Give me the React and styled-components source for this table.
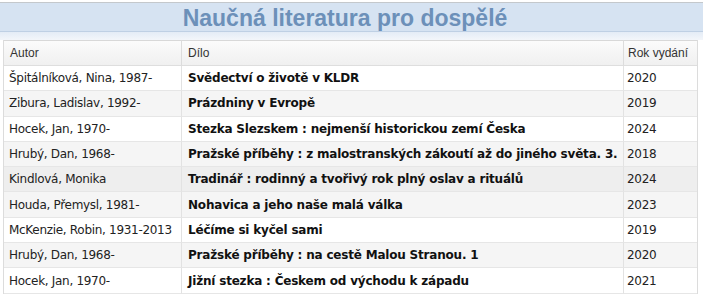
import React from "react";
import styled, { createGlobalStyle } from "styled-components";

const Global = createGlobalStyle`
  html, body { margin: 0; padding: 0; background: #ffffff; }
  body { font-family: "Liberation Sans", Arial, sans-serif; }
`;

const Page = styled.div`
  width: 703px;
  height: 296px;
  overflow: hidden;
  padding-top: 2px;
  box-sizing: border-box;
`;

const TitleBar = styled.div`
  height: 28px;
  border-top: 1px solid #c4c8cc;
  background: #d6e3f2;
  border-bottom: 1px solid #bfd0e4;
  display: flex;
  align-items: center;
  justify-content: center;
`;

const Title = styled.h1`
  margin: 1px 13px 0 0;
  font-family: "Liberation Sans", Arial, sans-serif;
  font-weight: bold;
  font-size: 23px;
  line-height: 26px;
  color: #6c90b9;
`;

const Band = styled.div`
  height: 8px;
  background: linear-gradient(#e4ecf6, #f3f6fa);
`;

const Table = styled.div`
  margin: 0 5px 0 3px;
  border-left: 1px solid #dcdcdc;
  border-right: 1px solid #dcdcdc;
  display: grid;
  grid-template-columns: 177px 442px 1fr;
`;

const HeadCell = styled.div`
  height: 24px;
  display: flex;
  align-items: center;
  padding-left: ${(p) => p.$pad}px;
  font-family: "Liberation Sans", Arial, sans-serif;
  font-size: 12px;
  color: #333;
  background: linear-gradient(#fbfbfb, #f0f0f0);
  border-top: 1px solid #d8d8d8;
  border-bottom: 1px solid #dedede;
  border-left: ${(p) => (p.$first ? "none" : "1px solid #dcdcdc")};
`;

const Cell = styled.div`
  height: 24.3px;
  display: flex;
  align-items: center;
  padding-left: ${(p) => p.$pad}px;
  font-family: "DejaVu Sans", Tahoma, sans-serif;
  font-size: 12px;
  font-weight: ${(p) => (p.$bold ? "bold" : "normal")};
  letter-spacing: ${(p) => (p.$bold ? "-0.2px" : "-0.3px")};
  color: ${(p) => (p.$bold ? "#111" : "#222")};
  white-space: nowrap;
  overflow: hidden;
  background: ${(p) => p.$bg};
  border-bottom: 1px solid #e6e6e6;
  border-left: ${(p) => (p.$first ? "none" : "1px solid #e2e2e2")};
`;

const rows = [
  ["Špitálníková, Nina, 1987-", "Svědectví o životě v KLDR", "2020"],
  ["Zibura, Ladislav, 1992-", "Prázdniny v Evropě", "2019"],
  ["Hocek, Jan, 1970-", "Stezka Slezskem : nejmenší historickou zemí Česka", "2024"],
  ["Hrubý, Dan, 1968-", "Pražské příběhy : z malostranských zákoutí až do jiného světa. 3.", "2018"],
  ["Kindlová, Monika", "Tradinář : rodinný a tvořivý rok plný oslav a rituálů", "2024"],
  ["Houda, Přemysl, 1981-", "Nohavica a jeho naše malá válka", "2023"],
  ["McKenzie, Robin, 1931-2013", "Léčíme si kyčel sami", "2019"],
  ["Hrubý, Dan, 1968-", "Pražské příběhy : na cestě Malou Stranou. 1", "2020"],
  ["Hocek, Jan, 1970-", "Jižní stezka : Českem od východu k západu", "2021"],
];

function rowBg(i) {
  if (i === 4) return "#eeeeee";
  return i % 2 === 1 ? "#f5f5f5" : "#ffffff";
}

export default function App() {
  return (
    <Page>
      <Global />
      <TitleBar>
        <Title>Naučná literatura pro dospělé</Title>
      </TitleBar>
      <Band />
      <Table>
        <HeadCell $first $pad={6}>Autor</HeadCell>
        <HeadCell $pad={6}>Dílo</HeadCell>
        <HeadCell $pad={4}>Rok vydání</HeadCell>
        {rows.map((r, i) => (
          <React.Fragment key={i}>
            <Cell $first $pad={5} $bg={rowBg(i)}>{r[0]}</Cell>
            <Cell $bold $pad={6} $bg={rowBg(i)}>{r[1]}</Cell>
            <Cell $pad={3} $bg={rowBg(i)}>{r[2]}</Cell>
          </React.Fragment>
        ))}
      </Table>
    </Page>
  );
}
